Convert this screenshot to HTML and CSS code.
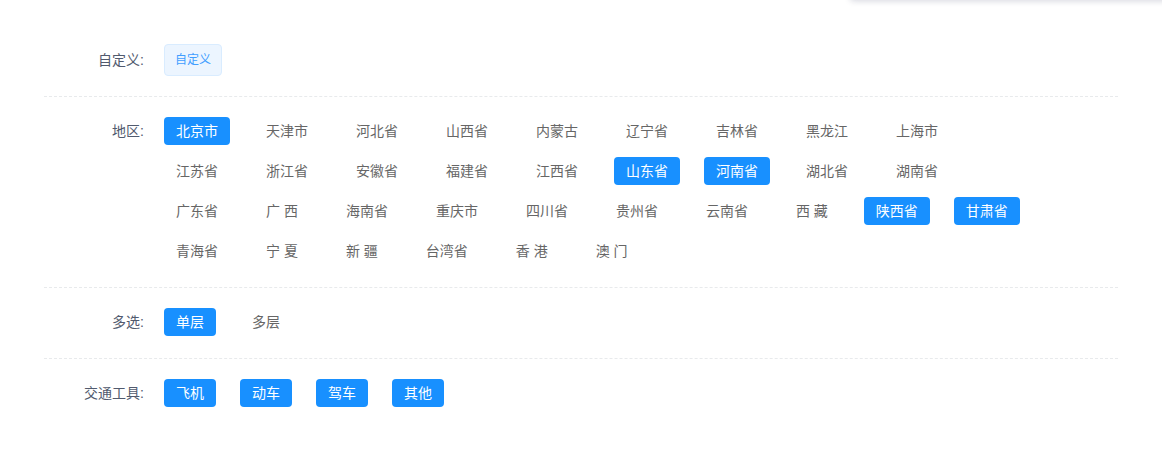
FILE: index.html
```html
<!DOCTYPE html>
<html lang="zh-CN">
<head>
    <meta charset="UTF-8">
    <meta name="viewport" content="width=device-width, initial-scale=1.0">
    <title>标签筛选</title>
    <link rel="stylesheet" href="styles.css">
</head>
<body>
    <div class="popover-edge"></div>
    <div class="filter">
        <div class="filter-row first">
            <div class="filter-label">自定义:</div>
            <div class="tag-list">
                <span class="custom-tag">自定义</span>
            </div>
        </div>

        <div class="filter-row">
            <div class="filter-label">地区:</div>
            <div class="tag-list wide">
                <span class="tag active">北京市</span>
                <span class="tag">天津市</span>
                <span class="tag">河北省</span>
                <span class="tag">山西省</span>
                <span class="tag">内蒙古</span>
                <span class="tag">辽宁省</span>
                <span class="tag">吉林省</span>
                <span class="tag">黑龙江</span>
                <span class="tag">上海市</span>
                <span class="tag">江苏省</span>
                <span class="tag">浙江省</span>
                <span class="tag">安徽省</span>
                <span class="tag">福建省</span>
                <span class="tag">江西省</span>
                <span class="tag active">山东省</span>
                <span class="tag active">河南省</span>
                <span class="tag">湖北省</span>
                <span class="tag">湖南省</span>
                <span class="tag">广东省</span>
                <span class="tag">广 西</span>
                <span class="tag">海南省</span>
                <span class="tag">重庆市</span>
                <span class="tag">四川省</span>
                <span class="tag">贵州省</span>
                <span class="tag">云南省</span>
                <span class="tag">西 藏</span>
                <span class="tag active">陕西省</span>
                <span class="tag active">甘肃省</span>
                <span class="tag">青海省</span>
                <span class="tag">宁 夏</span>
                <span class="tag">新 疆</span>
                <span class="tag">台湾省</span>
                <span class="tag">香 港</span>
                <span class="tag">澳 门</span>
            </div>
        </div>

        <div class="filter-row">
            <div class="filter-label">多选:</div>
            <div class="tag-list">
                <span class="tag active">单层</span>
                <span class="tag">多层</span>
            </div>
        </div>

        <div class="filter-row last">
            <div class="filter-label">交通工具:</div>
            <div class="tag-list">
                <span class="tag active">飞机</span>
                <span class="tag active">动车</span>
                <span class="tag active">驾车</span>
                <span class="tag active">其他</span>
            </div>
        </div>
    </div>
</body>
</html>
```

FILE: styles.css
```css
body { margin: 0; background: #fff; font-family: "Liberation Sans", "Noto Sans CJK SC", sans-serif; font-size: 14px; }
.popover-edge { position: absolute; top: -42px; left: 850px; right: -10px; height: 42px; background: #fff; border-radius: 4px; box-shadow: 0 1px 6px rgba(20, 30, 70, 0.18); }
.filter { padding: 24px 44px 0 44px; }
.filter-row { display: flex; align-items: flex-start; padding: 20px 0 22px; border-bottom: 1px dashed #e8eaec; }
.filter-row.first { padding-top: 20px; padding-bottom: 20px; }
.filter-row.last { border-bottom: none; }
.filter-label { width: 120px; padding-right: 20px; box-sizing: border-box; text-align: right; line-height: 28px; color: #515a6e; flex-shrink: 0; }
.filter-row.first .filter-label { line-height: 32px; }
.tag-list { display: flex; flex-wrap: wrap; gap: 12px 24px; }
.tag-list.wide { width: 870px; }
.tag { display: inline-block; height: 28px; line-height: 28px; padding: 0 12px; border-radius: 4px; color: #666; white-space: pre; }
.tag.active { background: #1890ff; color: #fff; }
.custom-tag { display: inline-block; height: 32px; line-height: 30px; padding: 0 10px; box-sizing: border-box; font-size: 12px; color: #409eff; background: #ecf5ff; border: 1px solid #d9ecff; border-radius: 4px; }
```
